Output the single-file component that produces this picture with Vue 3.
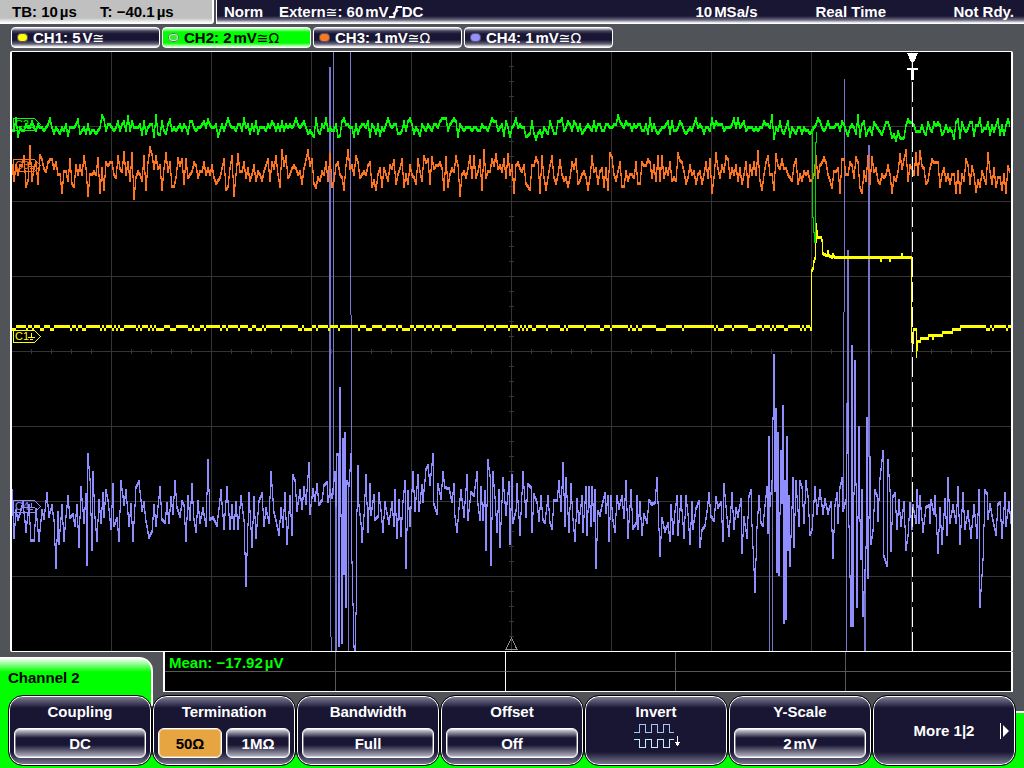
<template>
  <div class="scope">
    <header class="status-bar">
      <div class="timebase">
        <span class="tb">TB: 10<span class="unit">µs</span></span>
        <span>T: −40.1<span class="unit">µs</span></span>
      </div>
      <div class="trigger">
        <span class="mode">Norm</span>
        <span class="source">Extern<span class="sym">≅</span>: 60<span class="unit">mV</span>
          <svg class="edge" width="13" height="12" viewBox="0 0 13 12"><path d="M0 11H5L8 1H13M4 8L9 4" /></svg>DC</span>
        <span class="rate">10<span class="unit">MSa/s</span></span>
        <span class="acq">Real Time</span>
        <span>Not Rdy.</span>
      </div>
    </header>

    <nav class="channels">
      <button
        v-for="ch in channels"
        :key="ch.name"
        type="button"
        class="channel"
        :class="[ch.id, { active: ch.id === activeChannel }]"
        @click="activeChannel = ch.id"
      >
        <span class="led"></span>
        <span>{{ ch.name }}: {{ ch.value }}<span class="unit">{{ ch.unit }}</span><span class="sym">≅</span><span v-if="ch.ohm" class="sym ohm">Ω</span></span>
      </button>
    </nav>

    <main class="display">
      <svg class="plot" viewBox="12 52 999 599">
        <g class="grid">
          <path v-for="x in gridX" :key="'x' + x" :d="`M${x} 52V651`" />
          <path v-for="y in gridY" :key="'y' + y" :d="`M12 ${y}H1011`" />
          <path :d="ticks" />
        </g>
        <path class="axis-mark" d="M511.5 638L517 649.5H506Z" />

        <path class="trace c4 fast" :d="burstPath" />
        <path class="trace c4 fast wide" :d="wideBurstPath" />
        <path class="trace c4" :d="c4Path" />
        <path class="trace c3" :d="c3Path" />
        <path class="trace c1 flat" :d="c1FlatPath" />
        <path class="trace c1" :d="c1PulsePath" />
        <path class="trace c2" :d="c2Path" />
        <path class="trace c2 drop" d="M812.5 126V217H813.5V232H814.5V243M815.5 243V142H816.5V132" />

        <g v-for="m in markers" :key="m.name" class="marker" :class="m.name.toLowerCase()">
          <path :d="`M13.5 ${m.y}H34.5L40.5 ${m.y + 6}L34.5 ${m.y + 12}H13.5Z`" />
          <path :d="`M31.5 ${m.y + 2}V${m.y + 7}M28 ${m.y + 7}H35M30 ${m.y + 9}H33`" />
          <text x="15" :y="m.y + 9.5">{{ m.name }}</text>
        </g>

        <path class="trigger-line" d="M912.5 82V651" />
        <path class="trigger-mark" d="M907 53H918L914 62H911ZM912 62H913V68H918V70H914V80H911V70H907V68H912Z" />
      </svg>
    </main>

    <section class="lower">
      <h2 class="tab">Channel 2</h2>
      <div class="measure">
        <div v-for="n in 10" :key="n" class="cell">
          <template v-if="n === 1">Mean: −17.92<span class="unit">µV</span></template>
        </div>
      </div>
    </section>

    <footer class="menu">
      <button v-for="key in softkeys" :key="key.label" type="button" class="softkey" :class="{ more: key.more }">
        <span class="label">{{ key.label }}</span>
        <span v-if="key.values" class="values">
          <span v-for="v in key.values" :key="v.text" class="value" :class="{ selected: v.selected }">{{ v.text }}<span v-if="v.unit" class="unit">{{ v.unit }}</span></span>
        </span>
        <svg v-if="key.icon" class="invert" width="48" height="27" viewBox="0 0 48 27">
          <path class="wave" d="M0 9.5H5.5V1.5H11.5V9.5H17.5V1.5H23.5V9.5H29.5V1.5H35.5V9.5H40" />
          <path class="wave low" d="M0 16.5H5.5V24.5H11.5V16.5H17.5V24.5H23.5V16.5H29.5V24.5H35.5V16.5H40" />
          <path class="arrow" d="M43.5 13V20M41 19H46L43.5 22Z" />
        </svg>
        <svg v-if="key.more" class="next" width="10" height="16" viewBox="0 0 10 16">
          <path d="M0 0H1V16H0ZM3 2L9 8L3 14Z" />
        </svg>
      </button>
    </footer>
  </div>
</template>

<script setup>
import { ref } from 'vue'

const activeChannel = ref('c2')

const channels = [
  { id: 'c1', name: 'CH1', value: 5, unit: 'V', ohm: false },
  { id: 'c2', name: 'CH2', value: 2, unit: 'mV', ohm: true },
  { id: 'c3', name: 'CH3', value: 1, unit: 'mV', ohm: true },
  { id: 'c4', name: 'CH4', value: 1, unit: 'mV', ohm: true },
]

const softkeys = [
  { label: 'Coupling', values: [{ text: 'DC' }] },
  { label: 'Termination', values: [{ text: '50Ω', selected: true }, { text: '1MΩ' }] },
  { label: 'Bandwidth', values: [{ text: 'Full' }] },
  { label: 'Offset', values: [{ text: 'Off' }] },
  { label: 'Invert', icon: true },
  { label: 'Y-Scale', values: [{ text: '2', unit: 'mV' }] },
  { label: 'More 1|2', more: true },
]

const markers = [
  { name: 'C1', y: 330.5 },
  { name: 'C2', y: 118.5 },
  { name: 'C3', y: 159.5 },
  { name: 'C4', y: 500.5 },
]

// graticule
const gridX = [111.5, 211.5, 311.5, 411.5, 511.5, 611.5, 711.5, 811.5, 911.5]
const gridY = [126.5, 201.5, 276.5, 351.5, 426.5, 501.5, 576.5]

let ticks = ''
for (let x = 31.5; x < 1011; x += 20) ticks += `M${x} 349V354`
for (let y = 66.5; y < 651; y += 15) ticks += `M509 ${y}H514`

function random(seed) {
  let s = seed
  return () => {
    s = (s * 1664525 + 1013904223) % 4294967296
    return s / 4294967296
  }
}

// one bar per pixel column, from the lowest to the highest value in it
function columns(points) {
  const low = {}
  const high = {}
  const add = (x, y) => {
    low[x] = Math.min(low[x] ?? y, y)
    high[x] = Math.max(high[x] ?? y, y)
  }
  for (let i = 1; i < points.length; i++) {
    const [x1, y1] = points[i - 1]
    const [x2, y2] = points[i]
    if (x1 === x2) {
      add(x1, y1)
      add(x1, y2)
      continue
    }
    for (let x = x1; x < x2; x++) {
      add(x, Math.round(y1 + ((y2 - y1) * (x - x1)) / (x2 - x1)))
      add(x, Math.round(y1 + ((y2 - y1) * (x + 1 - x1)) / (x2 - x1)))
    }
  }
  return Object.keys(low).map(x => `M${x}.5 ${low[x] - 1}V${high[x] + 2}`).join('')
}

// noise in 3 px steps, with known peaks placed over it
function noise(seed, centre, spread, peaks) {
  const rnd = random(seed)
  const points = []
  for (let x = 12; x <= 1011; x += 2) {
    const r = (rnd() + rnd() + rnd() - 1.5) * spread
    const peak = peaks.find(p => p[0] - x >= 0 && p[0] - x < 2)
    points.push([x, peak ? peak[1] : centre(x) + Math.round(r / 3) * 3])
  }
  return columns(points)
}

const c2Path = noise(7, x => (x > 870 ? 128 : 127), 9, [
  [69, 135], [79, 119], [105, 119], [129, 116], [143, 134], [160, 134], [170, 119], [208, 119],
  [326, 118], [340, 135], [380, 135], [388, 118], [421, 135], [444, 118], [492, 118], [505, 135],
  [528, 135], [775, 138], [819, 118], [848, 135], [867, 135], [902, 138], [909, 119], [955, 138],
  [975, 135], [981, 118], [999, 119],
])

const c3Path = noise(23, x => (x > 940 ? 177 : 171), 19, [
  [27, 186], [31, 146], [38, 183], [41, 155], [73, 183], [88, 195], [99, 158], [100, 192],
  [125, 152], [147, 189], [152, 154], [162, 189], [179, 158], [228, 186], [234, 195], [238, 154],
  [317, 187], [331, 154], [345, 189], [376, 189], [395, 160], [416, 183], [433, 157], [447, 157],
  [480, 160], [496, 154], [508, 154], [514, 192], [528, 186], [536, 157], [546, 189], [560, 160],
  [605, 186], [612, 157], [680, 160], [759, 151], [763, 189], [775, 189], [777, 154], [798, 183],
  [825, 157], [833, 187], [856, 157], [861, 187], [873, 157], [893, 192], [900, 154], [920, 151],
  [956, 192], [961, 192], [973, 166], [977, 191], [996, 186], [1009, 166],
])

// the resting level toggles between two adjacent codes
const rnd1 = random(5)
let c1FlatPath = ''
let level = 326.5
for (let x = 12; x < 1011; x += 2) {
  if (x >= 811 && x < 960) continue
  const toggle = level === 326.5 ? 0.25 : 0.6
  if (rnd1() < toggle) level = level === 326.5 ? 329.5 : 326.5
  c1FlatPath += `M${x} ${level}h2`
}

const c1PulsePath = columns([
  [810, 328], [811, 328], [811, 271], [813, 268], [814, 261], [815, 258], [815, 241], [816, 241], [816, 224], [818, 237], [821, 237], [822, 240],
  [823, 253], [827, 255], [828, 251], [829, 255], [832, 257], [833, 254], [835, 257], [880, 257], [881, 260], [882, 257], [889, 257], [890, 260],
  [891, 257], [901, 257], [902, 254], [903, 257], [911, 257], [911, 339], [913, 342], [913, 329], [916, 329], [916, 356], [918, 341], [920, 341],
  [921, 338], [928, 338], [929, 335], [932, 335], [933, 338], [934, 335], [942, 335], [943, 332], [952, 332], [953, 329], [961, 329],
])

// fast transients that leave the screen
const burstPath = 'M330.5 67V637M331.5 637V651M333.5 52V495M350.5 52V315M351.5 315V454M355.5 613V651M348.5 485V651M769.5 437V651M772.5 481V651M844.5 79V312M843.5 312V511M846.5 403V651M864.5 570V651M865.5 547V651'
const wideBurstPath = 'M330 67V495M336 505V651M848 250V403M869 145V457'

const c4Path = columns([
  [12, 490], [14, 537], [16, 510], [18, 519], [20, 513], [23, 502], [26, 531], [29, 505], [31, 540], [34, 540], [36, 509], [39, 540],
  [42, 510], [44, 518], [47, 493], [49, 516], [52, 505], [54, 520], [56, 567], [58, 512], [59, 543], [62, 505], [64, 540], [66, 516],
  [68, 496], [70, 517], [73, 514], [75, 525], [77, 505], [79, 546], [81, 487], [84, 522], [86, 494], [87, 564], [88, 454], [90, 479],
  [92, 549], [93, 472], [95, 517], [97, 540], [99, 500], [101, 522], [103, 493], [104, 516], [106, 490], [108, 500], [111, 528], [113, 484],
  [114, 525], [117, 518], [119, 540], [121, 481], [124, 504], [126, 490], [129, 525], [131, 504], [133, 540], [136, 487], [139, 481], [142, 510],
  [144, 502], [146, 521], [149, 537], [152, 531], [154, 505], [156, 525], [160, 487], [162, 519], [165, 522], [167, 503], [169, 522], [171, 497],
  [173, 513], [175, 481], [177, 507], [180, 516], [182, 501], [184, 505], [186, 540], [188, 496], [190, 519], [192, 484], [194, 519], [196, 531],
  [198, 501], [200, 522], [203, 508], [206, 525], [208, 460], [210, 519], [213, 517], [217, 525], [221, 490], [224, 528], [227, 487], [230, 528],
  [232, 505], [234, 528], [236, 502], [238, 528], [241, 496], [244, 520], [246, 585], [249, 493], [252, 546], [254, 497], [256, 537], [259, 501],
  [262, 493], [264, 525], [266, 508], [269, 522], [271, 472], [274, 512], [276, 520], [279, 534], [281, 508], [283, 526], [285, 493], [287, 543],
  [290, 496], [292, 534], [293, 475], [295, 480], [297, 510], [300, 490], [302, 508], [304, 487], [306, 503], [309, 463], [310, 513], [313, 489],
  [315, 500], [317, 484], [319, 504], [322, 500], [324, 485], [327, 482], [328, 501], [330, 490], [332, 497], [335, 472], [336, 505], [337, 454],
  [338, 454], [339, 645], [340, 388], [342, 642], [343, 439], [344, 573], [345, 433], [346, 606], [347, 481], [349, 485], [351, 454],
  [352, 562], [354, 646], [355, 651], [356, 613], [357, 510], [358, 466], [359, 505], [361, 523], [362, 541], [364, 515], [366, 475], [368, 531],
  [370, 484], [371, 514], [374, 495], [375, 519], [378, 516], [379, 493], [381, 510], [383, 531], [385, 502], [387, 513], [389, 523], [392, 502],
  [394, 525], [395, 490], [397, 537], [399, 500], [401, 535], [403, 501], [405, 481], [406, 567], [408, 491], [410, 525], [413, 472], [415, 510],
  [418, 475], [419, 510], [422, 485], [423, 501], [426, 469], [428, 465], [430, 484], [433, 454], [434, 504], [437, 513], [438, 484], [441, 498],
  [443, 472], [445, 487], [449, 488], [452, 501], [454, 484], [455, 516], [457, 531], [459, 508], [461, 490], [464, 516], [467, 475], [468, 519],
  [471, 492], [474, 495], [477, 472], [478, 504], [480, 519], [481, 487], [483, 519], [485, 491], [486, 549], [488, 460], [490, 475], [491, 564],
  [493, 472], [495, 497], [497, 531], [499, 490], [500, 546], [503, 478], [506, 514], [509, 482], [510, 543], [512, 475], [513, 522], [516, 510],
  [517, 484], [520, 534], [523, 472], [526, 516], [528, 484], [531, 487], [532, 531], [534, 494], [537, 502], [539, 520], [541, 496], [543, 519],
  [545, 522], [548, 496], [550, 522], [552, 528], [554, 500], [557, 500], [559, 481], [561, 510], [563, 463], [565, 525], [566, 478], [569, 531],
  [571, 484], [573, 519], [575, 540], [577, 499], [579, 522], [582, 496], [583, 531], [586, 487], [587, 534], [589, 487], [591, 525], [592, 487],
  [594, 520], [595, 490], [596, 567], [598, 511], [600, 515], [602, 505], [605, 493], [606, 512], [608, 496], [609, 540], [611, 496], [613, 520],
  [615, 531], [617, 496], [619, 508], [622, 496], [624, 517], [626, 481], [628, 537], [631, 490], [633, 528], [636, 523], [637, 496], [638, 528],
  [640, 502], [642, 534], [644, 514], [647, 522], [649, 500], [652, 504], [655, 502], [657, 478], [658, 502], [660, 555], [662, 518], [665, 531],
  [668, 523], [670, 540], [671, 505], [673, 533], [675, 511], [677, 496], [678, 534], [681, 496], [684, 537], [686, 496], [688, 514], [690, 543],
  [692, 502], [693, 528], [696, 508], [699, 501], [700, 546], [702, 530], [705, 525], [707, 511], [709, 493], [711, 516], [714, 520], [716, 497],
  [718, 507], [721, 502], [723, 540], [724, 484], [727, 517], [729, 535], [732, 493], [734, 528], [736, 508], [738, 516], [741, 499], [742, 552],
  [744, 517], [747, 537], [749, 496], [751, 490], [752, 525], [755, 591], [757, 527], [759, 496], [761, 522], [763, 525], [765, 505], [767, 487],
  [768, 532], [769, 437], [770, 505], [772, 481], [774, 355], [775, 490], [776, 409], [777, 571], [778, 433], [779, 574], [781, 451], [782, 502],
  [783, 406], [784, 622], [785, 481], [786, 618], [787, 437], [788, 549], [789, 496], [790, 565], [793, 478], [794, 546], [796, 481], [799, 525],
  [800, 481], [802, 487], [804, 522], [806, 481], [808, 496], [810, 534], [812, 529], [815, 487], [817, 513], [820, 490], [823, 513], [825, 499],
  [828, 513], [831, 502], [833, 557], [835, 505], [837, 493], [838, 522], [840, 487], [842, 478], [843, 510], [846, 500], [848, 403], [849, 526],
  [851, 625], [852, 346], [853, 625], [855, 361], [857, 606], [859, 427], [860, 520], [861, 558], [862, 490], [863, 615], [866, 547], [867, 418],
  [868, 577], [870, 457], [871, 543], [873, 530], [875, 490], [877, 495], [878, 520], [880, 478], [883, 451], [884, 556], [887, 565], [888, 460],
  [890, 490], [891, 550], [893, 496], [895, 493], [897, 528], [899, 500], [901, 525], [904, 502], [906, 549], [908, 535], [910, 503], [912, 528],
  [913, 505], [916, 522], [917, 490], [919, 522], [920, 496], [923, 531], [926, 507], [929, 505], [930, 522], [931, 500], [934, 513], [935, 496],
  [938, 552], [940, 508], [942, 543], [945, 499], [947, 534], [948, 478], [950, 522], [953, 505], [956, 522], [958, 487], [960, 543], [963, 493],
  [965, 528], [968, 511], [971, 537], [974, 505], [976, 525], [977, 537], [979, 490], [980, 606], [983, 559], [985, 490], [987, 493], [988, 518],
  [990, 504], [993, 520], [996, 534], [998, 504], [1000, 502], [1002, 537], [1005, 493], [1006, 525], [1009, 502], [1011, 522],
])
</script>

<style>
body {
  margin: 0;
  background: #505458;
}
</style>

<style scoped>
.scope {
  background: #505458;
  color: #fff;
  font: bold 15px/18px "Liberation Sans", Arial, sans-serif;
}

button {
  font: inherit;
  color: inherit;
  cursor: pointer;
}

.unit {
  margin-left: 2px;
}

.sym {
  font: 14px/16px "DejaVu Sans", sans-serif;
}

.status-bar {
  display: flex;
  gap: 2px;
  height: 24px;
}

.timebase {
  box-sizing: border-box;
  display: flex;
  width: 214px;
  padding: 3px 12px;
  background: linear-gradient(#c0c0c0 18px, #fff 23px);
  border-right: 2px solid #fff;
  border-radius: 0 0 3px 0;
  color: #000;
}

.tb {
  width: 88px;
}

.trigger {
  flex: 1;
  box-sizing: border-box;
  display: flex;
  padding: 3px 10px 3px 7px;
  background: linear-gradient(#191634 16px, #6c6a82 20px, #fff 23px);
  border-left: 1px solid #fff;
}

.mode {
  width: 55px;
}

.source {
  flex: 1;
}

.edge {
  vertical-align: -1px;
  fill: none;
  stroke: #fff;
  stroke-width: 2;
}

.rate {
  width: 120px;
}

.acq {
  width: 138px;
}

.channels {
  display: flex;
  gap: 2px;
  padding: 3px 11px;
}

.channel {
  display: flex;
  align-items: center;
  gap: 5px;
  width: 149px;
  height: 21px;
  padding: 0 5px;
  border: 1px solid #fff;
  border-radius: 4px;
  background: linear-gradient(#e0e0e8 0, #45425e 3px, #191634 6px, #191634 12px, #656378 16px, #fff 19px);
  text-align: left;
  white-space: nowrap;
}

.channel.active {
  background: linear-gradient(#e0ffe0 0, #0f0 4px, #0f0 15px, #e0ffe0 19px);
  color: #000;
}

.led {
  box-sizing: border-box;
  width: 11px;
  height: 9px;
  border: 1px solid #55536a;
  border-radius: 4px;
}

.c1 .led {
  background: #ff0;
}

.c2 .led {
  background: #3e3;
  border-color: #d8e8d8;
  outline: 1px solid #484;
  outline-offset: -1px;
  box-shadow: inset 0 0 0 1px #d8e8d8;
}

.c3 .led {
  background: #ff7820;
}

.c4 .led {
  background: #9490ff;
}

.display {
  margin: 0 11px 0 10px;
  border: 1px solid #fff;
  border-width: 1px 2px;
  border-radius: 2px;
  background: #000;
}

.plot {
  display: block;
  width: 100%;
  height: auto;
  shape-rendering: crispEdges;
}

.grid {
  fill: none;
  stroke: #343434;
}

.axis-mark {
  fill: none;
  stroke: #909090;
}

.trace {
  fill: none;
}

.trace.c1 {
  stroke: #ff0;
}

.trace.flat {
  stroke-width: 3;
}

.trace.c2 {
  stroke: #0f0;
}

.trace.drop {
  stroke: #00d800;
}

.trace.c3 {
  stroke: #ff741c;
}

.trace.c4 {
  stroke: #908eff;
}

.trace.fast {
  stroke: #7775cc;
}

.trace.wide {
  stroke-width: 2;
}

.marker {
  fill: none;
}

.marker text {
  font: 11px "Liberation Sans", Arial, sans-serif;
}

.marker.c1 {
  stroke: #ff0;
}

.marker.c1 text {
  fill: #ff0;
  stroke: none;
}

.marker.c2 {
  stroke: #0f0;
}

.marker.c2 text {
  fill: #0f0;
  stroke: none;
}

.marker.c3 {
  stroke: #ff741c;
}

.marker.c3 text {
  fill: #ff741c;
  stroke: none;
}

.marker.c4 {
  stroke: #908eff;
}

.marker.c4 text {
  fill: #908eff;
  stroke: none;
}

.trigger-line {
  stroke: #fff;
  stroke-dasharray: 20 5;
}

.trigger-mark {
  fill: #fff;
}

.lower {
  display: flex;
  gap: 10px;
  margin-right: 11px;
}

.tab {
  box-sizing: border-box;
  width: 153px;
  height: 35px;
  margin: 5px 0 0;
  padding: 11px 8px 0;
  border: solid #fff;
  border-width: 1px 2px 0 0;
  border-radius: 0 14px 0 0;
  background: linear-gradient(#fff 0, #0f0 14px);
  color: #000;
  font: inherit;
}

.measure {
  flex: 1;
  display: grid;
  grid-template-columns: 171fr repeat(3, 170fr) 165fr;
  grid-template-rows: 20px 19px;
  border: solid #fff;
  border-width: 0 2px 1px;
  background: #000;
  color: #0f0;
}

.cell {
  padding: 2px 4px;
  line-height: 17px;
  border-right: 1px solid #585858;
  box-sizing: border-box;
}

.cell:nth-child(-n + 5) {
  border-bottom: 1px solid #585858;
}

.cell:nth-child(5n + 2) {
  border-right-color: #fff;
}

.cell:nth-child(5n) {
  border-right: 0;
}

.menu {
  display: grid;
  grid-template-columns: repeat(7, 1fr);
  padding: 3px 8px 2px;
  background:
    linear-gradient(#0f0, #0f0) 0 0 / 151px 100% no-repeat,
    linear-gradient(#fff, #fff) 151px 0 / 2px 14px no-repeat,
    linear-gradient(#fff 2px, #0f0 2px) 100% 100% / 9px 57px no-repeat,
    linear-gradient(#0f0, #0f0) 0 100% / 100% 13px no-repeat;
}

.softkey {
  box-sizing: border-box;
  display: flex;
  flex-direction: column;
  align-items: stretch;
  height: 71px;
  padding: 6px 5px;
  border: 1px solid #000;
  border-radius: 15px;
  background: linear-gradient(#85849a 0, #191634 12px, #191634 56px, #77758c 68px);
  box-shadow: inset 0 0 0 1px #fff;
}

.label {
  text-align: center;
  line-height: 20px;
}

.values {
  display: flex;
  gap: 4px;
  margin-top: 6px;
}

.value {
  flex: 1;
  box-sizing: border-box;
  height: 30px;
  border: 1px solid #fff;
  border-radius: 6px;
  background: linear-gradient(#e0e0e8 0, #191634 9px, #191634 16px, #b8b7c4 28px);
  box-shadow: inset 0 0 0 1px rgba(255, 255, 255, 0.4);
  line-height: 29px;
}

.value.selected {
  background: #e6a540;
  color: #000;
}

.invert {
  align-self: center;
  margin: 1px 0 0 4px;
  fill: none;
  shape-rendering: crispEdges;
}

.wave {
  stroke: #a0c8f0;
}

.wave.low {
  stroke: #c0f0ff;
}

.arrow {
  stroke: #fff;
  fill: #fff;
}

.more {
  flex-direction: row;
  align-items: center;
  padding-left: 15px;
}

.more .label {
  flex: 1;
}

.next {
  fill: #fff;
}
</style>
